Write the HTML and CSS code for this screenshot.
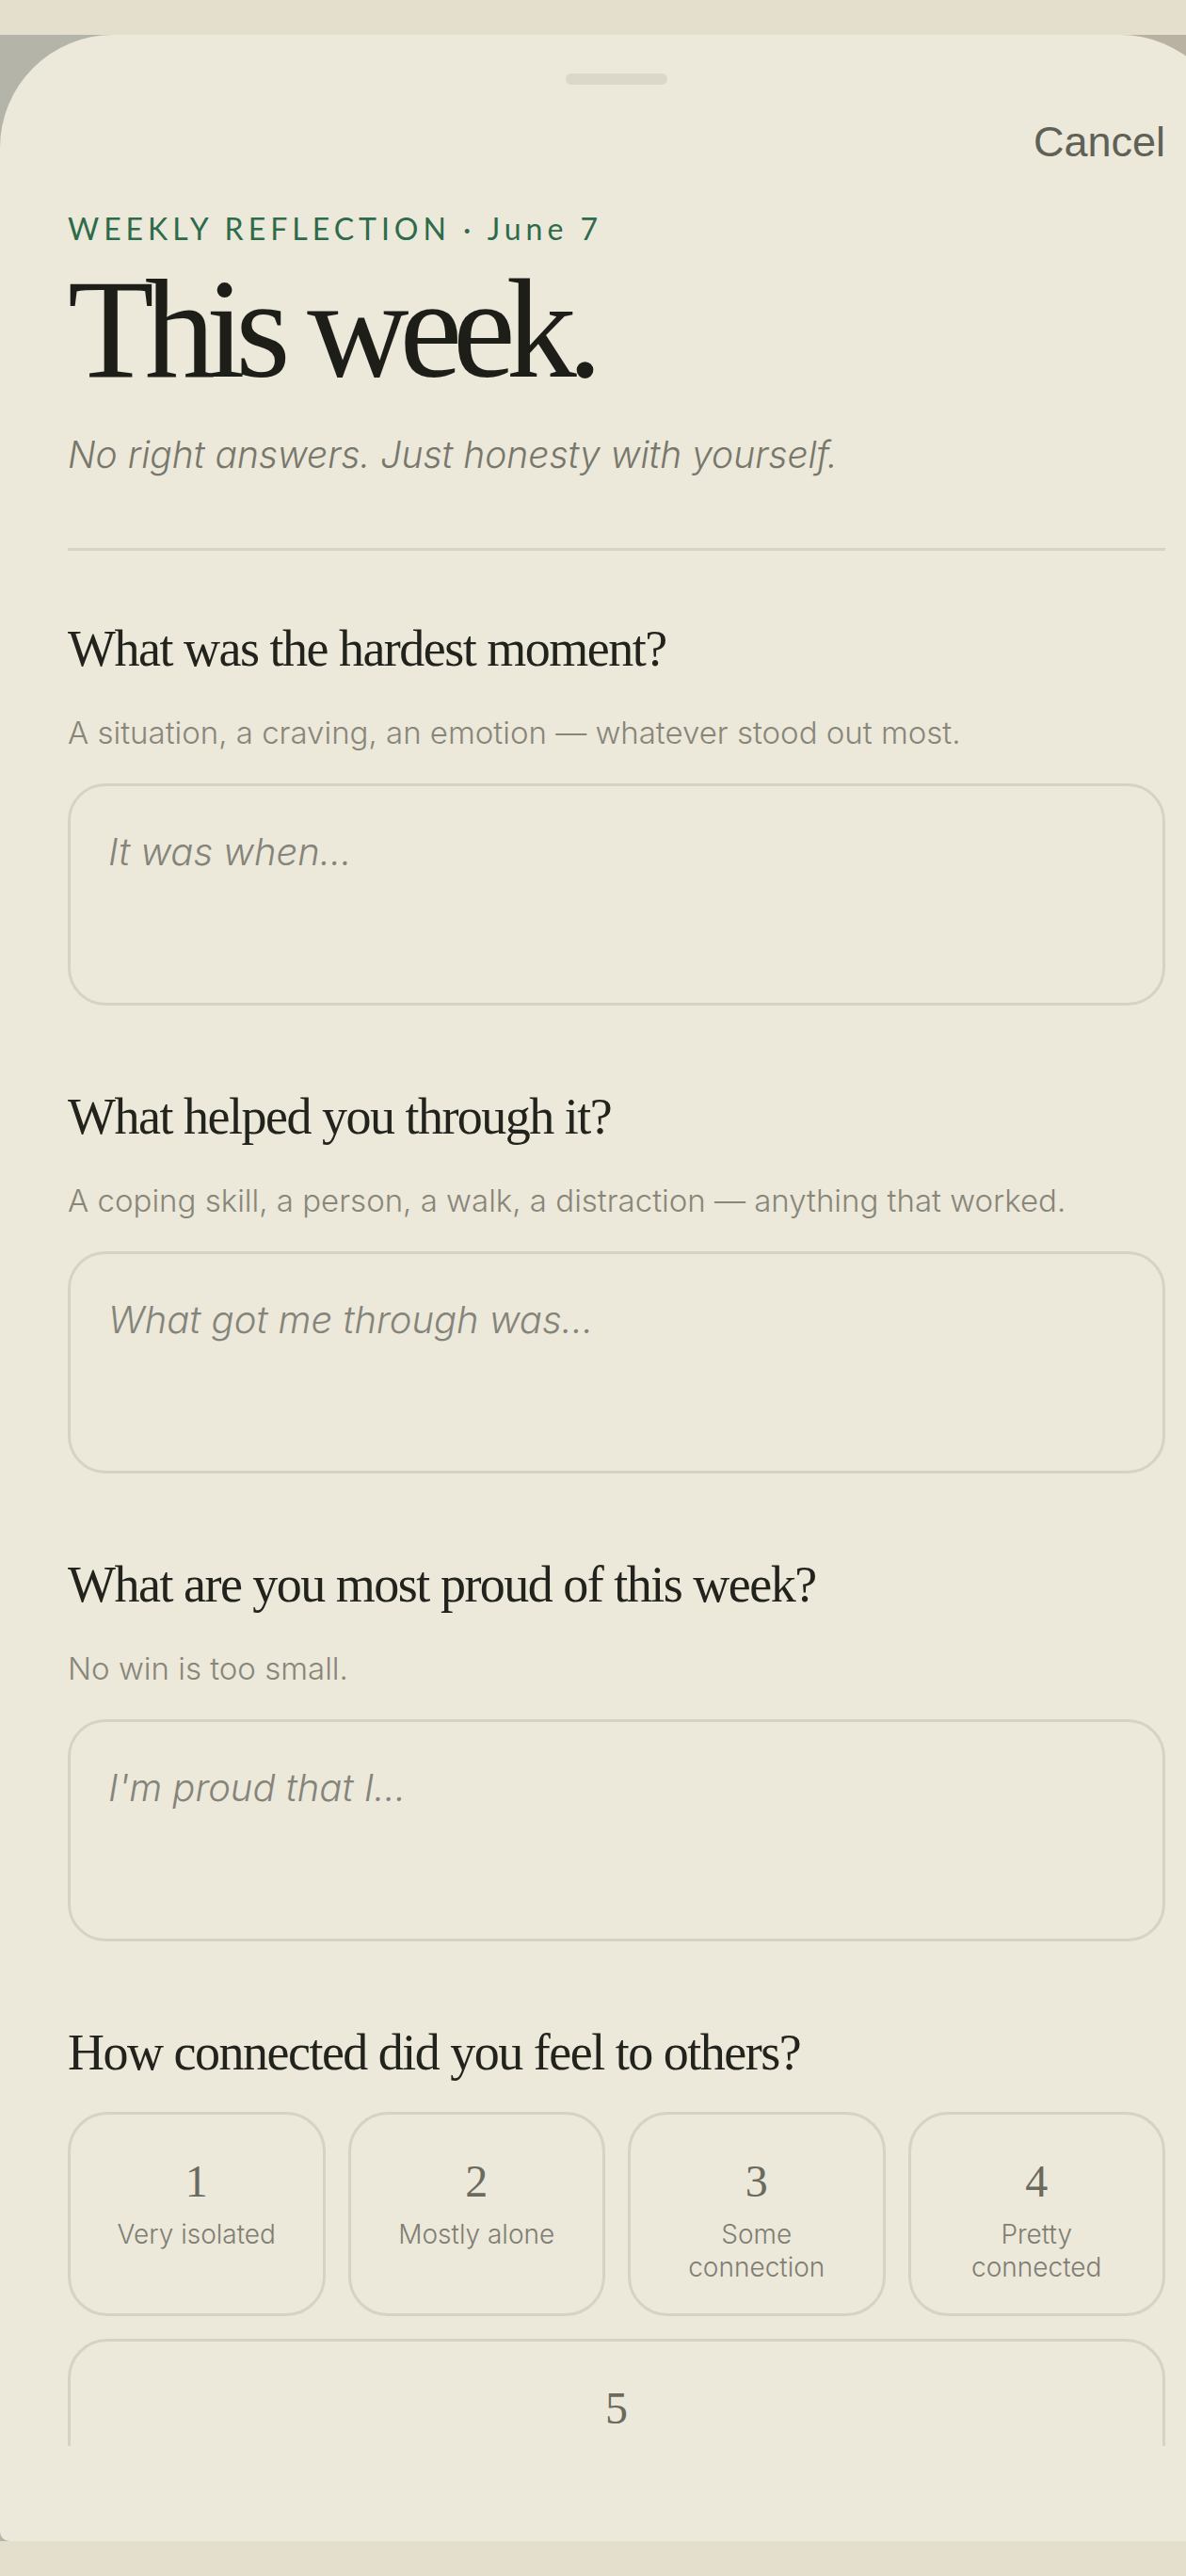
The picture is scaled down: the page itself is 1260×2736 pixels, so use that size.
FILE: index.html
```html
<!DOCTYPE html>
<html lang="en">
<head>
<meta charset="utf-8">
<title>Weekly Reflection</title>
<link rel="stylesheet" href="styles.css">
</head>
<body>
<div class="backdrop">
  <div class="sheet">
    <div class="grabber"></div>
    <div class="topbar"><button class="cancel" type="button">Cancel</button></div>
    <div class="scroll">
      <p class="eyebrow">WEEKLY REFLECTION · June 7</p>
      <h1 class="title">This week.</h1>
      <p class="lede">No right answers. Just honesty with yourself.</p>
      <hr class="rule">

      <section class="question">
        <h2 class="q-title">What was the hardest moment?</h2>
        <p class="hint">A situation, a craving, an emotion — whatever stood out most.</p>
        <textarea class="answer" placeholder="It was when..."></textarea>
      </section>

      <section class="question">
        <h2 class="q-title">What helped you through it?</h2>
        <p class="hint">A coping skill, a person, a walk, a distraction — anything that worked.</p>
        <textarea class="answer" placeholder="What got me through was..."></textarea>
      </section>

      <section class="question">
        <h2 class="q-title">What are you most proud of this week?</h2>
        <p class="hint">No win is too small.</p>
        <textarea class="answer" placeholder="I'm proud that I..."></textarea>
      </section>

      <section class="question">
        <h2 class="q-title">How connected did you feel to others?</h2>
        <div class="scale">
          <button class="option" type="button"><span class="num">1</span><span class="lbl">Very isolated</span></button>
          <button class="option" type="button"><span class="num">2</span><span class="lbl">Mostly alone</span></button>
          <button class="option" type="button"><span class="num">3</span><span class="lbl">Some connection</span></button>
          <button class="option" type="button"><span class="num">4</span><span class="lbl">Pretty connected</span></button>
          <button class="option" type="button"><span class="num">5</span><span class="lbl">Deeply connected</span></button>
        </div>
      </section>
    </div>
  </div>
</div>
</body>
</html>
```

FILE: styles.css
```css
html, body {
  margin: 0;
  padding: 0;
}

body {
  width: 1260px;
  height: 2736px;
  overflow: hidden;
  background: #e4dfcd;
  padding-top: 37px;
  box-sizing: border-box;
}

.backdrop {
  height: 2662px;
  background: linear-gradient(90deg, #b4b4a9 0%, #b6b3a6 60%, #b9b1a1 100%);
}

.sheet {
  width: 1310px;
  height: 2662px;
  box-sizing: border-box;
  background: #ece8da;
  border-radius: 120px 120px 10px 10px;
  display: flex;
  flex-direction: column;
  padding: 0 72px 101px;
}

.grabber {
  flex: none;
  align-self: center;
  width: 108px;
  height: 12px;
  border-radius: 6px;
  background: #dcd8c9;
  margin-top: 41px;
}

.topbar {
  flex: none;
  display: flex;
  justify-content: flex-end;
  margin-top: 35px;
}

.cancel {
  font: 400 45px/52px "Liberation Sans", Arial, sans-serif;
  color: #5f6157;
  background: none;
  border: 0;
  padding: 0;
  margin: 0;
}

.scroll {
  flex: 1;
  min-height: 0;
  overflow: hidden;
}

.eyebrow {
  margin: 47px 0 0;
  font: 400 32px/38px Lato, "Open Sans", sans-serif;
  letter-spacing: 5px;
  color: #2e6b4b;
}

.title {
  margin: 12px 0 0;
  font: 400 150px/150px "Liberation Serif", "Times New Roman", serif;
  letter-spacing: -10px;
  color: #1d1e18;
}

.lede {
  margin: 34px 0 0;
  font: italic 300 39px/50px Inter, "Noto Sans", sans-serif;
  color: #78776c;
}

.rule {
  margin: 74px 0 0;
  border: 0;
  height: 3px;
  background: #d7d3c5;
}

.question {
  margin-top: 86px;
}

.rule + .question {
  margin-top: 72px;
}

.q-title {
  margin: 0;
  font: 400 54px/65px "Liberation Serif", "Times New Roman", serif;
  letter-spacing: -1.5px;
  color: #22231c;
}

.hint {
  margin: 35px 0 0;
  font: 300 33px/43px Inter, "Noto Sans", sans-serif;
  color: #888679;
}

.answer {
  display: block;
  margin: 32px 0 0;
  width: 100%;
  height: 236px;
  box-sizing: border-box;
  border: 3px solid #d6d2c5;
  border-radius: 40px;
  background: transparent;
  padding: 42px 40px;
  font: italic 300 40px/56px Inter, "Noto Sans", sans-serif;
  color: #3a3b33;
  resize: none;
  outline: none;
}

.answer::placeholder {
  color: #85847a;
  opacity: 1;
}

.scale {
  margin-top: 30px;
  display: flex;
  flex-wrap: wrap;
  gap: 24px;
}

.option {
  flex: 1 1 240px;
  height: 217px;
  box-sizing: border-box;
  border: 3px solid #d6d2c5;
  border-radius: 42px;
  background: transparent;
  display: flex;
  flex-direction: column;
  align-items: center;
  padding: 42px 36px 0;
  margin: 0;
}

.num {
  font: 400 48px/58px "Liberation Serif", "Times New Roman", serif;
  color: #6a6a5e;
}

.lbl {
  margin-top: 10px;
  font: 300 28px/35px Inter, "Noto Sans", sans-serif;
  color: #7f7e72;
  text-align: center;
}
```
